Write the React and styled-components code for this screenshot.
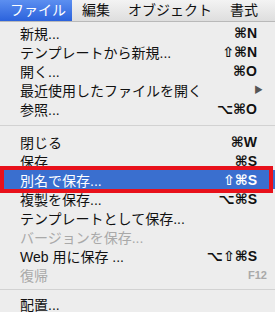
import React from "react";
import styled, { createGlobalStyle, css } from "styled-components";

const items = [
  { label: "新規...", keys: "⌘N" },
  { label: "テンプレートから新規...", keys: "⇧⌘N" },
  { label: "開く...", keys: "⌘O" },
  { label: "最近使用したファイルを開く", submenu: true },
  { label: "参照...", keys: "⌥⌘O" },
  { separator: 14 },
  { label: "閉じる", keys: "⌘W" },
  { label: "保存", keys: "⌘S" },
  { label: "別名で保存...", keys: "⇧⌘S", selected: true },
  { label: "複製を保存...", keys: "⌥⌘S" },
  { label: "テンプレートとして保存..." },
  { label: "バージョンを保存...", disabled: true },
  { label: "Web 用に保存 ...", keys: "⌥⇧⌘S" },
  { label: "復帰", keys: "F12", disabled: true, fkey: true },
  { separator: 10 },
  { label: "配置..." }
];

const titles = ["ファイル", "編集", "オブジェクト", "書式"];

export default function App() {
  return (
    <>
      <GlobalStyle />
      <Screen>
        <MenuBar>
          {titles.map((t, i) => (
            <MenuTitle key={t} $active={i === 0}>
              {t}
            </MenuTitle>
          ))}
        </MenuBar>
        <Menu>
          {items.map((item, i) =>
            item.separator ? (
              <Separator key={i} $h={item.separator} />
            ) : (
              <Item key={i} $selected={item.selected} $disabled={item.disabled}>
                <Label>{item.label}</Label>
                {item.submenu && <Arrow>▶</Arrow>}
                {item.keys && <Keys $fkey={item.fkey}>{item.keys}</Keys>}
              </Item>
            )
          )}
        </Menu>
      </Screen>
    </>
  );
}

const GlobalStyle = createGlobalStyle`
  body {
    margin: 0;
    background: #ededed;
    font-family: "Liberation Sans", "Noto Sans CJK JP", sans-serif;
  }
`;

const Screen = styled.div`
  width: 275px;
  height: 312px;
  overflow: hidden;
  background: #ededed;
`;

const MenuBar = styled.div`
  display: flex;
  height: 21px;
  background: linear-gradient(#f3f3f3, #dedede);
  border-bottom: 1px solid #b9b9b9;
`;

const MenuTitle = styled.div`
  flex-shrink: 0;
  white-space: nowrap;
  padding: 0 ${props => (props.$active ? "10px" : "9px")};
  font-size: 14px;
  line-height: 21px;
  color: #111;
  ${props =>
    props.$active &&
    css`
      width: 52px;
      margin-right: 1px;
      color: #fff;
      background: linear-gradient(#5c8ff0, #2b62dc);
    `}
`;

const Menu = styled.div`
  padding-top: 1px;
  background: #ededed;
`;

const Item = styled.div`
  position: relative;
  display: flex;
  align-items: center;
  justify-content: space-between;
  height: 19px;
  padding: 0 18px 0 20px;
  font-size: 14px;
  color: ${props => (props.$disabled ? "#a9a9a9" : "#111")};
  ${props =>
    props.$selected &&
    css`
      color: #fff;
      background: #3a6fcf;
      &::after {
        content: "";
        position: absolute;
        top: -4px;
        bottom: -4px;
        left: 0;
        right: 2px;
        border: 4px solid #e8111b;
      }
    `}
`;

const Label = styled.span`
  white-space: nowrap;
`;

const Keys = styled.span`
  font-family: "Liberation Sans", "DejaVu Sans", sans-serif;
  font-weight: bold;
  font-size: ${props => (props.$fkey ? "11px" : "14px")};
  margin-right: ${props => (props.$fkey ? "-10px" : "0")};
`;

const Arrow = styled.span`
  font-size: 9px;
  color: #555;
  margin-right: -6px;
`;

const Separator = styled.div`
  height: ${props => props.$h}px;
  display: flex;
  align-items: center;
  &::after {
    content: "";
    flex: 1;
    height: 1px;
    background: #d2d2d2;
  }
`;
